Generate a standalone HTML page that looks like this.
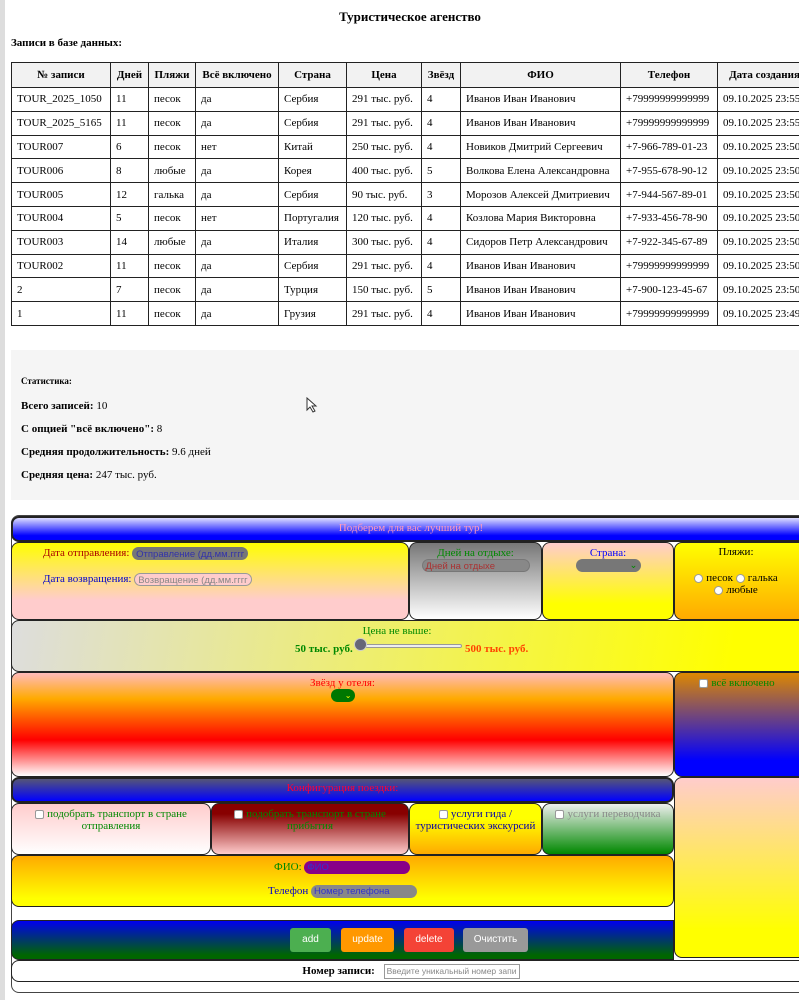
<!DOCTYPE html>
<html><head><meta charset="utf-8"><style>
*{box-sizing:border-box;margin:0;padding:0}
body{width:799px;height:1000px;overflow:hidden;background:#fff;font-family:"Liberation Serif",serif;font-size:12px;position:relative}
.strip{position:absolute;left:0;top:0;width:5px;height:1000px;background:#ddd}
h1{position:absolute;top:9px;left:0;width:820px;text-align:center;font-size:13px}
.sub{position:absolute;top:37px;left:11px;font-weight:bold;font-size:11px}
table{position:absolute;left:11px;top:62px;border-collapse:collapse;width:800px;table-layout:fixed}
td,th{border:1px solid #222;height:23.8px;padding:0 5px;white-space:nowrap;overflow:hidden;font-size:11px;text-align:left}
th{background:#f2f2f2;text-align:center;height:25px}
.stats{position:absolute;left:11px;top:350px;width:790px;height:150px;background:#f5f5f5;padding-left:10px}
.stats p{position:absolute;left:10px;font-size:11px}
.a{position:absolute;border:1px solid #222;border-radius:8px}
.c{text-align:center}
.inp{display:inline-block;height:13px;border-radius:7px;font-family:"Liberation Sans",sans-serif;font-size:9.5px;padding:0 3px;vertical-align:middle;line-height:13px}
.cb{display:inline-block;width:9px;height:9px;border:1px solid #999;background:#fff;border-radius:2px;vertical-align:middle;margin-right:3px}
.rd{display:inline-block;width:9px;height:9px;border:1px solid #999;background:#fff;border-radius:50%;vertical-align:middle;margin-right:3px}
.btn{position:absolute;top:928px;height:24px;color:#fff;font-family:"Liberation Sans",sans-serif;font-size:10px;line-height:24px;text-align:center;border-radius:3px}
</style></head><body>
<div class="strip"></div>
<h1>Туристическое агенство</h1>
<div class="sub">Записи в базе данных:</div>
<table>
<colgroup><col style="width:99px"><col style="width:38px"><col style="width:47px"><col style="width:83px"><col style="width:68px"><col style="width:75px"><col style="width:39px"><col style="width:160px"><col style="width:97px"><col style="width:94px"></colgroup>
<tr><th>№ записи</th><th>Дней</th><th>Пляжи</th><th>Всё включено</th><th>Страна</th><th>Цена</th><th>Звёзд</th><th>ФИО</th><th>Телефон</th><th>Дата создания</th></tr>
<tr><td>TOUR_2025_1050</td><td>11</td><td>песок</td><td>да</td><td>Сербия</td><td>291 тыс. руб.</td><td>4</td><td>Иванов Иван Иванович</td><td>+79999999999999</td><td>09.10.2025 23:55</td></tr>
<tr><td>TOUR_2025_5165</td><td>11</td><td>песок</td><td>да</td><td>Сербия</td><td>291 тыс. руб.</td><td>4</td><td>Иванов Иван Иванович</td><td>+79999999999999</td><td>09.10.2025 23:55</td></tr>
<tr><td>TOUR007</td><td>6</td><td>песок</td><td>нет</td><td>Китай</td><td>250 тыс. руб.</td><td>4</td><td>Новиков Дмитрий Сергеевич</td><td>+7-966-789-01-23</td><td>09.10.2025 23:50</td></tr>
<tr><td>TOUR006</td><td>8</td><td>любые</td><td>да</td><td>Корея</td><td>400 тыс. руб.</td><td>5</td><td>Волкова Елена Александровна</td><td>+7-955-678-90-12</td><td>09.10.2025 23:50</td></tr>
<tr><td>TOUR005</td><td>12</td><td>галька</td><td>да</td><td>Сербия</td><td>90 тыс. руб.</td><td>3</td><td>Морозов Алексей Дмитриевич</td><td>+7-944-567-89-01</td><td>09.10.2025 23:50</td></tr>
<tr><td>TOUR004</td><td>5</td><td>песок</td><td>нет</td><td>Португалия</td><td>120 тыс. руб.</td><td>4</td><td>Козлова Мария Викторовна</td><td>+7-933-456-78-90</td><td>09.10.2025 23:50</td></tr>
<tr><td>TOUR003</td><td>14</td><td>любые</td><td>да</td><td>Италия</td><td>300 тыс. руб.</td><td>4</td><td>Сидоров Петр Александрович</td><td>+7-922-345-67-89</td><td>09.10.2025 23:50</td></tr>
<tr><td>TOUR002</td><td>11</td><td>песок</td><td>да</td><td>Сербия</td><td>291 тыс. руб.</td><td>4</td><td>Иванов Иван Иванович</td><td>+79999999999999</td><td>09.10.2025 23:50</td></tr>
<tr><td>2</td><td>7</td><td>песок</td><td>да</td><td>Турция</td><td>150 тыс. руб.</td><td>5</td><td>Иванов Иван Иванович</td><td>+7-900-123-45-67</td><td>09.10.2025 23:50</td></tr>
<tr><td>1</td><td>11</td><td>песок</td><td>да</td><td>Грузия</td><td>291 тыс. руб.</td><td>4</td><td>Иванов Иван Иванович</td><td>+79999999999999</td><td>09.10.2025 23:49</td></tr>
</table>
<div class="stats">
<p style="top:26px;font-size:9px;font-weight:bold">Статистика:</p>
<p style="top:50px"><b>Всего записей:</b> 10</p>
<p style="top:73px"><b>С опцией "всё включено":</b> 8</p>
<p style="top:96px"><b>Средняя продолжительность:</b> 9.6 дней</p>
<p style="top:119px"><b>Средняя цена:</b> 247 тыс. руб.</p>
</div>
<svg style="position:absolute;left:306px;top:397px" width="12" height="16"><path d="M1 1 L1 13 L4 10 L7 15 L9 14 L6 9 L10 9 Z" fill="#fff" stroke="#333"/></svg>

<div class="a" style="left:11px;top:515px;width:800px;height:478px;border-color:#444"></div>
<div class="a c" style="left:11px;top:516px;width:800px;height:26px;background:linear-gradient(#ddf,#00f 80%);color:#f9b;line-height:20px;font-size:11px;border-width:2px">Подберем для вас лучший тур!</div>

<div class="a" style="left:11px;top:542px;width:398px;height:78px;background:linear-gradient(#ff0,#fcc 75%)">
<div style="position:absolute;left:31px;top:4px;color:#a00;font-size:11px">Дата отправления: <span class="inp" style="background:#777;color:#33a;border:1px solid #777">Отправление (дд.мм.гггг</span></div>
<div style="position:absolute;left:31px;top:30px;color:#00c;font-size:11px">Дата возвращения: <span class="inp" style="background:#fcc;color:#888;border:1px solid #999">Возвращение (дд.мм.гггг</span></div>
</div>
<div class="a c" style="left:409px;top:542px;width:133px;height:78px;background:linear-gradient(#777,#fff);color:#080;font-size:11px;padding-top:4px">Дней на отдыхе:<br><span class="inp" style="background:#888;color:#a33;width:108px;text-align:left;border:1px solid #777">Дней на отдыхе</span></div>
<div class="a c" style="left:542px;top:542px;width:132px;height:78px;background:linear-gradient(#fcc,#ff0 80%);color:#00f;font-size:11px;padding-top:4px">Страна:<br><span class="inp" style="background:#777;width:65px;text-align:right;color:#080">⌄</span></div>
<div class="a c" style="left:674px;top:542px;width:140px;height:78px;background:linear-gradient(#ff0,#fa0);font-size:11px;padding-top:3px;padding-right:16px">Пляжи:<br><div style="margin-top:14px;white-space:nowrap"><span class="rd"></span>песок <span class="rd"></span>галька</div><div><span class="rd"></span>любые</div></div>

<div class="a" style="left:11px;top:620px;width:800px;height:52px;background:linear-gradient(100deg,#ddd,#ff0 90%)">
<div style="position:absolute;left:0;width:800px;top:4px;text-align:center;color:#080;font-size:11px;padding-right:30px">Цена не выше:</div>
<div style="position:absolute;left:283px;top:22px;color:#080;font-weight:bold;font-size:11px">50 тыс. руб.</div>
<div style="position:absolute;left:348px;top:23px;width:102px;height:4px;border:1px solid #999;border-radius:3px;background:#eee"></div>
<div style="position:absolute;left:342px;top:17px;width:13px;height:13px;border-radius:50%;background:#667;border:1px solid #ccc"></div>
<div style="position:absolute;left:453px;top:22px;color:#f40;font-weight:bold;font-size:11px">500 тыс. руб.</div>
</div>

<div class="a c" style="left:11px;top:672px;width:663px;height:105px;background:linear-gradient(#fbb,#fa0 25%,#f00 65%,#fff);color:#f00;font-size:11px;padding-top:4px">Звёзд у отеля:<br><span class="inp" style="background:#070;width:24px;color:#ff0;text-align:right;font-size:8px">⌄</span></div>
<div class="a c" style="left:674px;top:672px;width:140px;height:105px;background:linear-gradient(#d80,#00f 85%);color:#080;font-size:11px;padding-top:4px;padding-right:14px"><span class="cb"></span>всё включено</div>

<div class="a c" style="left:11px;top:777px;width:663px;height:26px;background:linear-gradient(#557,#00f);color:#f03;font-size:11px;line-height:18px;border-width:2px">Конфигурация поездки:</div>
<div class="a" style="left:674px;top:777px;width:140px;height:181px;background:linear-gradient(#fcc,#ff0 85%)"></div>

<div class="a c" style="left:11px;top:803px;width:200px;height:52px;background:linear-gradient(#fcc,#fff);color:#080;font-size:11px;padding:4px 6px"><span class="cb"></span>подобрать транспорт в стране отправления</div>
<div class="a c" style="left:211px;top:803px;width:198px;height:52px;background:linear-gradient(#800 20%,#fcc);color:#080;font-size:11px;padding:4px 8px"><span class="cb"></span>подобрать транспорт в стране прибытия</div>
<div class="a c" style="left:409px;top:803px;width:133px;height:52px;background:linear-gradient(#ff0 30%,#fa0);color:#00a;font-size:11px;padding:4px 4px"><span class="cb"></span>услуги гида / туристических экскурсий</div>
<div class="a c" style="left:542px;top:803px;width:132px;height:52px;background:linear-gradient(#eee,#080);color:#888;font-size:11px;padding:4px 2px"><span class="cb"></span>услуги переводчика</div>

<div class="a" style="left:11px;top:855px;width:663px;height:52px;background:linear-gradient(#fa0,#ff0 85%);font-size:11px">
<div style="position:absolute;left:262px;top:5px;color:#080">ФИО: <span class="inp" style="background:#808;color:#33c;width:106px">ФИО</span></div>
<div style="position:absolute;left:256px;top:29px;color:#00c">Телефон <span class="inp" style="background:#888;color:#33c;width:106px">Номер телефона</span></div>
</div>

<div class="a" style="left:11px;top:920px;width:663px;height:40px;background:linear-gradient(#00e,#060 90%);border-radius:8px 0 0 8px"></div>
<div class="btn" style="left:290px;width:41px;background:#4caf50">add</div>
<div class="btn" style="left:341px;width:53px;background:#ff9800">update</div>
<div class="btn" style="left:404px;width:50px;background:#f44336">delete</div>
<div class="btn" style="left:463px;width:65px;background:#999">Очистить</div>

<div class="a c" style="left:11px;top:960px;width:800px;height:22px;background:#fff;font-size:11px;line-height:20px;border-radius:8px 0 0 8px"><b>Номер записи:</b> <span style="display:inline-block;width:136px;height:15px;border:1px solid #999;vertical-align:middle;margin-left:6px;font-family:'Liberation Sans',sans-serif;font-size:8.5px;color:#888;line-height:13px;text-align:left;padding-left:2px;overflow:hidden;white-space:nowrap">Введите уникальный номер запи</span></div>
</body></html>
